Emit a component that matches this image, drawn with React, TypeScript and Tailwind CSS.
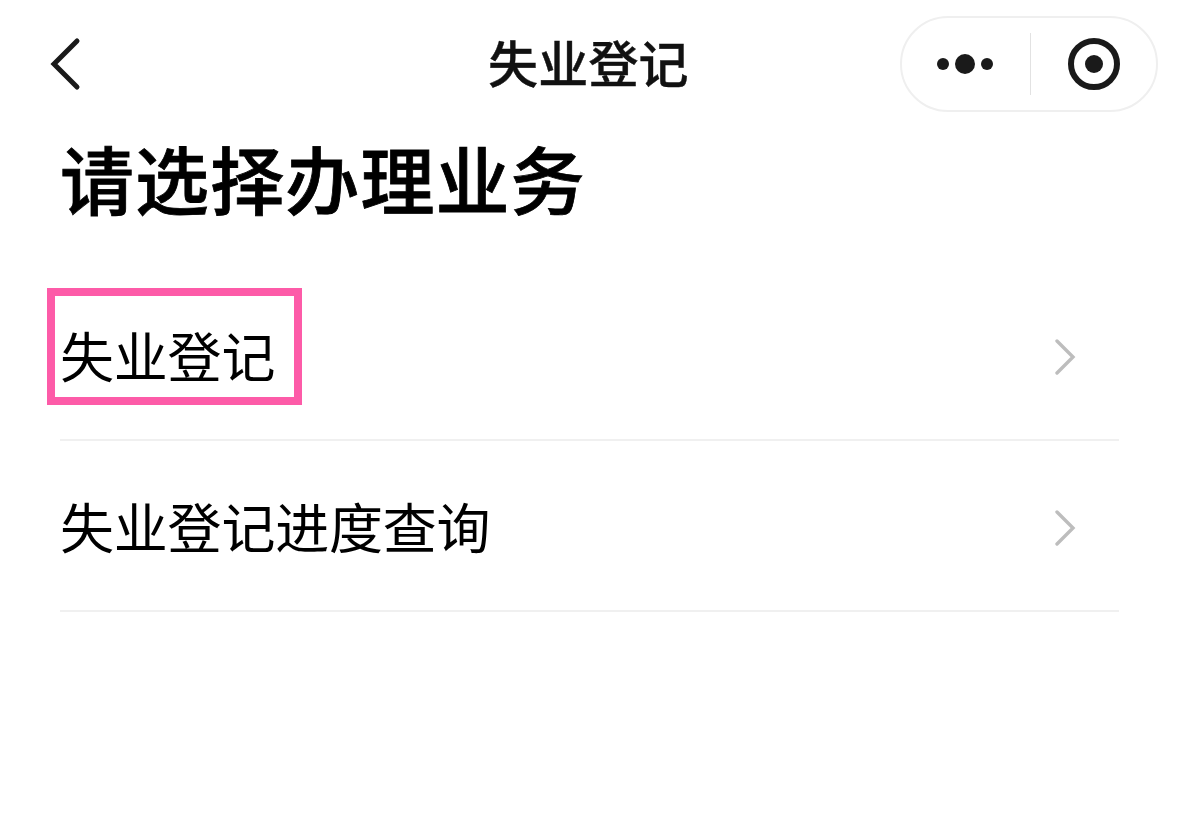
const font = { fontFamily: '"Noto Sans CJK SC", sans-serif' }

function Chevron() {
  return (
    <svg width="22" height="36" viewBox="0 0 22 36" fill="none" className="shrink-0">
      <path d="M3 2 L19 18 L3 34" stroke="#bdbdbd" strokeWidth="3.4" strokeLinecap="round" strokeLinejoin="miter" />
    </svg>
  )
}

function Row({ label, marked }: { label: string; marked?: boolean }) {
  return (
    <div className="relative flex h-[171px] items-center justify-between border-b-2 border-[#f0f0f0] pt-[4px] pr-[43px]">
      <span className="pb-[4px] text-[54px] leading-none tracking-[-0.2px] text-black">{label}</span>
      <Chevron />
      {marked && (
        <div className="absolute left-[-13px] top-[18px] h-[117px] w-[255px] border-[8px] border-[#fd5ba8]" />
      )}
    </div>
  )
}

export default function App() {
  return (
    <div className="h-[818px] w-[1179px] overflow-hidden bg-white" style={font}>
      <header className="relative flex h-[127px] items-start pt-[16px]">
        <div className="flex h-[96px] w-[240px] items-center pl-[46px]">
          <svg width="40" height="54" viewBox="0 0 40 54" fill="none">
            <path d="M31 4 L8 27 L31 50" stroke="#1a1a1a" strokeWidth="5" strokeLinecap="round" strokeLinejoin="miter" />
          </svg>
        </div>
        <h1 className="absolute left-[488px] top-[32px] text-[50px] font-medium leading-[58px] tracking-[0.2px] text-[#111111] [-webkit-text-stroke:0.4px_#111111]">失业登记</h1>
        <div className="ml-auto mr-[21px] flex h-[96px] w-[258px] items-center rounded-full border-2 border-[#efefef]">
          <div className="flex w-[128px] items-center justify-center gap-[6px] pr-[2px]">
            <span className="h-[12px] w-[12px] rounded-full bg-[#1a1a1a]" />
            <span className="h-[20px] w-[20px] rounded-full bg-[#1a1a1a]" />
            <span className="h-[12px] w-[12px] rounded-full bg-[#1a1a1a]" />
          </div>
          <div className="h-[62px] w-[1px] bg-[#e2e2e2]" />
          <div className="flex flex-1 items-center justify-center pl-[1px]">
            <div className="flex h-[52px] w-[52px] items-center justify-center rounded-full border-[6px] border-[#1a1a1a]">
              <span className="h-[18px] w-[18px] rounded-full bg-[#1a1a1a]" />
            </div>
          </div>
        </div>
      </header>
      <main className="pl-[60px] pr-[60px]">
        <h2 className="-mt-[4px] text-[74px] font-medium leading-[108px] tracking-[1.1px] text-black [-webkit-text-stroke:0.8px_#000000]">请选择办理业务</h2>
        <div className="mt-[39px]">
          <Row label="失业登记" marked />
          <Row label="失业登记进度查询" />
        </div>
      </main>
    </div>
  )
}
